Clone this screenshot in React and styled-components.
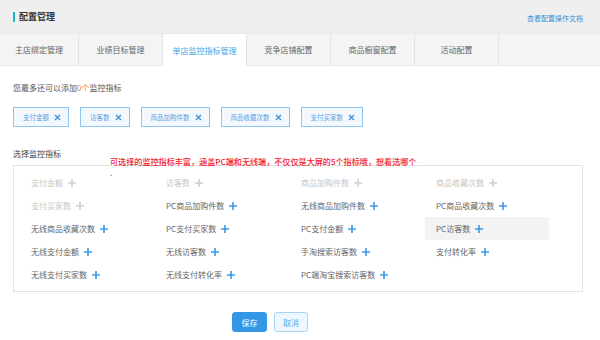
import React from 'react';
import styled, { createGlobalStyle } from 'styled-components';

const GlobalStyle = createGlobalStyle`
  body {
    margin: 0;
    background: #fff;
    font-family: "Noto Sans CJK SC", "Noto Sans", sans-serif;
  }
`;

const Page = styled.div`
  width: 600px;
  height: 340px;
  overflow: hidden;
  position: relative;
`;

const Header = styled.div`
  height: 33px;
  background: #efefef;
  display: flex;
  align-items: center;
  justify-content: space-between;
  padding: 0 17px 0 13px;
  box-sizing: border-box;
`;

const Title = styled.div`
  display: flex;
  align-items: center;
  gap: 4px;
  font-size: 9px;
  font-weight: 700;
  color: #333;
  &::before {
    content: '';
    width: 2px;
    height: 10px;
    background: #1fb3c4;
  }
`;

const DocLink = styled.a`
  font-size: 7px;
  color: #3a8fd6;
  text-decoration: none;
  margin-top: 2px;
`;

const Tabs = styled.div`
  height: 33px;
  background: #f4f4f4;
  display: flex;
  border-top: 1px solid #e8e8e8;
  border-bottom: 1px solid #e8e8e8;
  box-sizing: border-box;
`;

const Tab = styled.div`
  width: ${p => (p.$first ? 79 : 84)}px;
  flex: none;
  box-sizing: border-box;
  border-right: 1px solid #e4e4e4;
  display: flex;
  align-items: center;
  justify-content: center;
  font-size: 8px;
  color: ${p => (p.$active ? '#4aa3e8' : '#666')};
  background: ${p => (p.$active ? '#fff' : 'transparent')};
  margin-bottom: ${p => (p.$active ? '-1px' : '0')};
`;

const Content = styled.div`
  padding: 0 17px 0 13px;
  position: relative;
`;

const Hint = styled.div`
  font-size: 8px;
  color: #555;
  margin-top: 16px;
  line-height: 12px;
  em {
    font-style: normal;
    color: #ff7a22;
  }
`;

const TagRow = styled.div`
  display: flex;
  gap: 11px;
  margin-top: 13px;
`;

const Tag = styled.div`
  height: 20px;
  box-sizing: border-box;
  border: 1px solid #8ec6f2;
  background: #f2f8fe;
  display: flex;
  align-items: center;
  gap: 5px;
  padding: 0 7px 0 9px;
  font-size: 6.5px;
  color: #5aa2e0;
`;

const SectionTitle = styled.div`
  font-size: 8px;
  color: #444;
  margin-top: 21px;
  line-height: 12px;
`;

const Note = styled.div`
  position: absolute;
  left: 110px;
  top: 156px;
  width: 308px;
  font-size: 8.1px;
  line-height: 11px;
  color: #f5222d;
  font-weight: 500;
`;

const Panel = styled.div`
  margin-top: 5px;
  border: 1px solid #e2e2e2;
  padding: 5px 6px;
  display: grid;
  grid-template-columns: repeat(4, 124px);
  column-gap: 11px;
`;

const Item = styled.div`
  height: 23px;
  display: flex;
  align-items: center;
  gap: 5px;
  padding-left: 11px;
  font-size: 8px;
  color: ${p => (p.$off ? '#c6c6c6' : '#666')};
  background: ${p => (p.$hover ? '#f3f3f3' : 'transparent')};
`;

const Actions = styled.div`
  display: flex;
  gap: 7px;
  margin: 20px 0 0 219px;
`;

const Button = styled.button`
  height: 20px;
  width: ${p => p.$w}px;
  padding: 0;
  border-radius: 3px;
  font-family: inherit;
  font-size: 8px;
  border: 1px solid ${p => (p.$primary ? '#3497e6' : '#a8d2f5')};
  background: ${p => (p.$primary ? '#3497e6' : '#eef7ff')};
  color: ${p => (p.$primary ? '#fff' : '#5aa9e6')};
`;

const Cross = () => (
  <svg width="7" height="7" viewBox="0 0 7 7">
    <path d="M1 1L6 6M6 1L1 6" stroke="#3f92d9" strokeWidth="1.4" />
  </svg>
);

const Plus = ({ off }) => (
  <svg width="8" height="8" viewBox="0 0 8 8">
    <path d="M4 0V8M0 4H8" stroke={off ? '#cfcfcf' : '#3d97e8'} strokeWidth="1.6" />
  </svg>
);

const tabs = ['主店绑定管理', '业绩目标管理', '单店监控指标管理', '竞争店铺配置', '商品橱窗配置', '活动配置'];
const tags = ['支付金额', '访客数', '商品加购件数', '商品收藏次数', '支付买家数'];
const items = [
  ['支付金额', 1], ['访客数', 1], ['商品加购件数', 1], ['商品收藏次数', 1],
  ['支付买家数', 1], ['PC商品加购件数'], ['无线商品加购件数'], ['PC商品收藏次数'],
  ['无线商品收藏次数'], ['PC支付买家数'], ['PC支付金额'], ['PC访客数', 0, 1],
  ['无线支付金额'], ['无线访客数'], ['手淘搜索访客数'], ['支付转化率'],
  ['无线支付买家数'], ['无线支付转化率'], ['PC端淘宝搜索访客数'],
];

export default function App() {
  return (
    <Page>
      <GlobalStyle />
      <Header>
        <Title>配置管理</Title>
        <DocLink>查看配置操作文档</DocLink>
      </Header>
      <Tabs>
        {tabs.map((t, i) => (
          <Tab key={t} $first={i === 0} $active={i === 2}>{t}</Tab>
        ))}
      </Tabs>
      <Content>
        <Hint>您最多还可以添加<em>0个</em>监控指标</Hint>
        <TagRow>
          {tags.map(t => (
            <Tag key={t}>{t}<Cross /></Tag>
          ))}
        </TagRow>
        <SectionTitle>选择监控指标</SectionTitle>
        <Panel>
          {items.map(([t, off, hover]) => (
            <Item key={t} $off={off} $hover={hover}>{t}<Plus off={off} /></Item>
          ))}
        </Panel>
        <Actions>
          <Button $primary $w={35}>保存</Button>
          <Button $w={34}>取消</Button>
        </Actions>
      </Content>
      <Note>可选择的监控指标丰富，涵盖PC端和无线端，不仅仅是大屏的5个指标哦，想看选哪个 .</Note>
    </Page>
  );
}
